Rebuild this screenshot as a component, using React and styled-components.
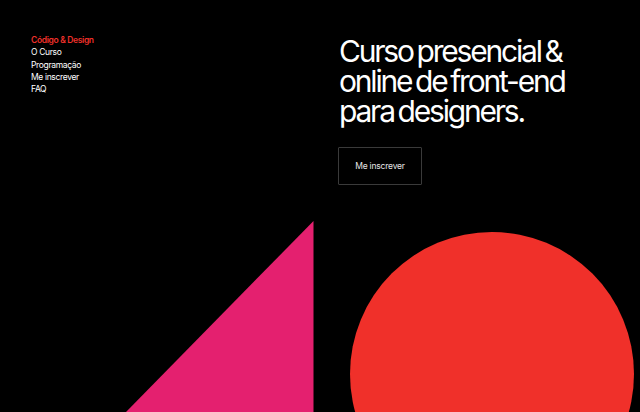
import React from "react";
import styled, { createGlobalStyle } from "styled-components";

const Global = createGlobalStyle`
  html, body { margin: 0; padding: 0; background: #000; }
  body { font-family: Inter, "Noto Sans", sans-serif; -webkit-font-smoothing: antialiased; }
`;

const Page = styled.div`
  width: 640px;
  height: 412px;
  overflow: hidden;
  background: #000;
  display: grid;
  grid-template-columns: 320px 320px;
`;

const LeftCol = styled.div`
  display: flex;
  flex-direction: column;
  height: 412px;
`;

const Nav = styled.nav`
  display: flex;
  flex-direction: column;
  align-items: flex-start;
  padding: 34px 0 0 31px;
`;

const NavLink = styled.a`
  font-size: 8.5px;
  line-height: 12.3px;
  color: ${(p) => (p.$brand ? "#f0302a" : "#ffffff")};
  font-weight: ${(p) => (p.$brand ? 600 : 400)};
  letter-spacing: -0.35px;
  text-decoration: none;
`;

const Triangle = styled.svg`
  margin-top: auto;
  display: block;
  flex-shrink: 0;
`;

const RightCol = styled.div`
  display: flex;
  flex-direction: column;
  align-items: flex-start;
  padding: 36px 0 0 19px;
`;

const Headline = styled.h1`
  margin: 0;
  font-size: 30px;
  line-height: 30px;
  font-weight: 400;
  color: #fff;
  letter-spacing: -2.2px;
  word-spacing: -2.5px;
  white-space: nowrap;
`;

const Line = styled.span`
  display: block;
  height: 30px;
`;

const Button = styled.button`
  margin: 21px 0 0 -1px;
  width: 84px;
  height: 38px;
  background: transparent;
  border: 1px solid #3a3a3a;
  border-radius: 1px;
  color: #e6e6e6;
  font-family: Inter, "Noto Sans", sans-serif;
  font-size: 8.5px;
  letter-spacing: -0.2px;
  cursor: pointer;
`;

const Circle = styled.div`
  margin: 47px 0 0 11px;
  width: 284px;
  height: 284px;
  flex-shrink: 0;
  border-radius: 50%;
  background: #f0302a;
`;

export default function App() {
  return (
    <>
      <Global />
      <Page>
        <LeftCol>
          <Nav>
            <NavLink $brand href="#">Código &amp; Design</NavLink>
            <NavLink href="#">O Curso</NavLink>
            <NavLink href="#">Programação</NavLink>
            <NavLink href="#">Me inscrever</NavLink>
            <NavLink href="#">FAQ</NavLink>
          </Nav>
          <Triangle width="320" height="191" viewBox="0 0 320 191">
            <polygon points="313.5,0 313.5,191 126,191" fill="#e4206f" />
          </Triangle>
        </LeftCol>
        <RightCol>
          <Headline>
            <Line>Curso presencial &amp;</Line>
            <Line>online de front-end</Line>
            <Line>para designers.</Line>
          </Headline>
          <Button>Me inscrever</Button>
          <Circle />
        </RightCol>
      </Page>
    </>
  );
}
